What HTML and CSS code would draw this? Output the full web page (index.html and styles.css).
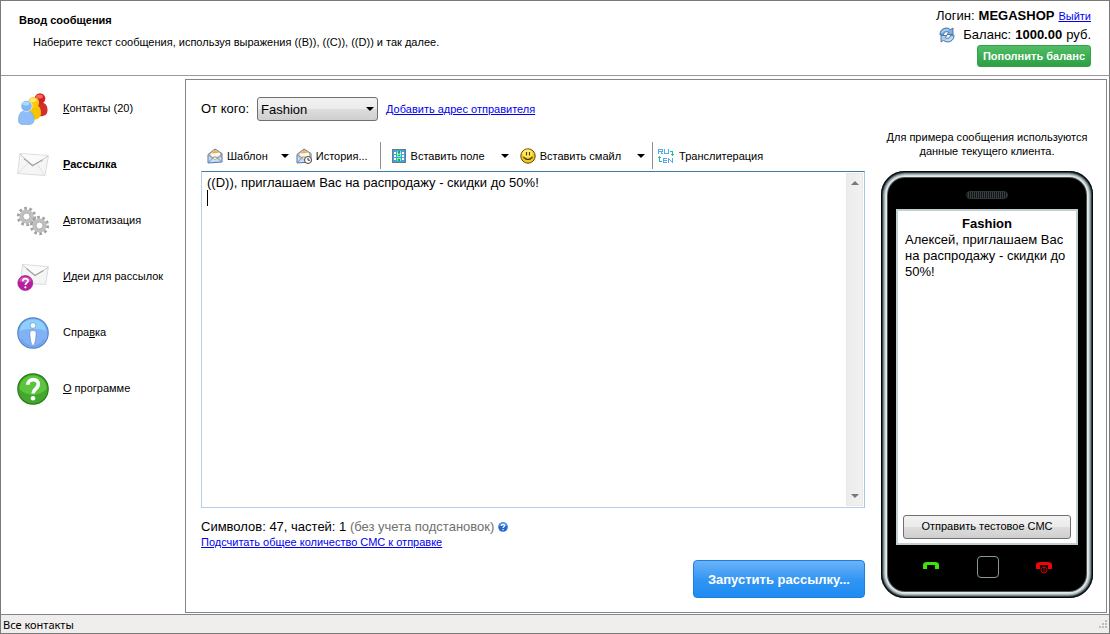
FILE: index.html
```html
<!DOCTYPE html>
<html lang="ru">
<head>
    <meta charset="UTF-8">
    <meta name="viewport" content="width=device-width, initial-scale=1.0">
    <title>Ввод сообщения</title>
    <link rel="stylesheet" href="styles.css">
</head>
<body>
    <header class="header">
        <div class="intro">
            <h1 class="title">Ввод сообщения</h1>
            <p class="subtitle">Наберите текст сообщения, используя выражения ((B)), ((C)), ((D)) и так далее.</p>
        </div>
        <div class="account">
            <div class="account-row">
                <span>Логин:</span>
                <b>MEGASHOP</b>
                <a class="link" href="#">Выйти</a>
            </div>
            <div class="account-row">
                <button class="refresh" type="button" aria-label="Обновить баланс">
                    <svg width="16" height="16" viewBox="0 0 16 16">
                        <path d="M1 8C.5 2 7-1 11.500 2.500L14 1v6.500H8l1.800-2C7.500 4 5 5 4.800 7.500z" fill="#7dafe0" stroke="#3a638f" stroke-width=".8"/>
                        <path d="M15 8c.5 6-6 9-10.500 5.500L2 15V8.500h6l-1.800 2c2.300 1.500 4.800.5 5-2z" fill="#a9cdec" stroke="#3a638f" stroke-width=".8"/>
                        <path d="M2.500 5.500Q5 2 9.500 2.800M13.500 10.500q-2 3-6 3" fill="none" stroke="#e2f0fb" stroke-width=".8"/>
                    </svg>
                </button>
                <span>Баланс:</span>
                <b>1000.00</b>
                <span>руб.</span>
            </div>
            <button class="pay-btn" type="button">Пополнить баланс</button>
        </div>
    </header>

    <div class="main">
        <nav class="sidebar">
            <a class="nav-item" href="#">
                <svg width="32" height="32" viewBox="0 0 32 32">
                    <path d="M20 23V14c0-3 2-4.500 4-4.500s6.500 1 6.500 7.500c0 5-3 7-10.500 6z" fill="#d22f2f"/>
                    <circle cx="23" cy="5.500" r="5.300" fill="#d9201f"/>
                    <ellipse cx="22.500" cy="3.500" rx="3.400" ry="2" fill="#ee6b60"/>
                    <path d="M11 25v-7c0-5 3-6.500 6-6.500s7 2 7 8c0 6-4 8.500-13 6.500z" fill="#f5c400"/>
                    <circle cx="16.500" cy="9.500" r="5.600" fill="#fbc911"/>
                    <ellipse cx="16" cy="7" rx="3.400" ry="2" fill="#ffe47a"/>
                    <path d="M1.500 27.500C1.500 21 4 17.500 9 17.500s8 3.500 8 9.500c0 3.500-3 4.800-8 4.800s-7.500-1-7.500-4.300z" fill="#90bdf8" stroke="#73a7ec" stroke-width=".7"/>
                    <circle cx="9.500" cy="13" r="5.600" fill="#82b4f5" stroke="#fff" stroke-width=".6"/>
                    <ellipse cx="9" cy="10.500" rx="3.600" ry="2" fill="#a6ddf8"/>
                </svg>
                <span><u>К</u>онтакты (20)</span>
            </a>
            <a class="nav-item active" href="#">
                <svg width="32" height="32" viewBox="0 0 32 32">
                    <path d="M3 4.500l28.500 2-3.500 20L.5 24.500z" fill="#f5f5f5" stroke="#dcdcdc"/>
                    <path d="M1 24l10-9.500M27.500 26L20.500 15.500" fill="none" stroke="#e2e2e2"/>
                    <path d="M3 5l12.500 12L31 7" fill="#fafafa" stroke="#c8c8c8"/>
                    <path d="M7 9.500l8.500 7 10-5.500" fill="none" stroke="#a2a2a2" stroke-width="1.200"/>
                </svg>
                <span><u>Р</u>ассылка</span>
            </a>
            <a class="nav-item" href="#">
                <svg width="32" height="32" viewBox="0 0 32 32">
                    <g fill="none" stroke="#a2a2a2">
                        <circle cx="9.500" cy="11.500" r="8" stroke-width="3.400" stroke-dasharray="2.600 2.430"/>
                        <circle cx="9.500" cy="11.500" r="5.300" stroke="#c0c0c0" stroke-width="3.600"/>
                        <circle cx="9.500" cy="11.500" r="3.500" stroke-width=".8"/>
                        <circle cx="22.500" cy="20.500" r="8" stroke-width="3.400" stroke-dasharray="2.600 2.430"/>
                        <circle cx="22.500" cy="20.500" r="5.300" stroke="#c0c0c0" stroke-width="3.600"/>
                        <circle cx="22.500" cy="20.500" r="3.500" stroke-width=".8"/>
                    </g>
                </svg>
                <span><u>А</u>втоматизация</span>
            </a>
            <a class="nav-item" href="#">
                <svg width="32" height="32" viewBox="0 0 32 32">
                    <path d="M5.500 3.500l26 2-3 18L3.500 22z" fill="#f5f5f5" stroke="#dcdcdc"/>
                    <path d="M5.500 4l12.500 10.500L31 6.500" fill="#fafafa" stroke="#c8c8c8"/>
                    <path d="M9.500 7.500l8.500 7 8.500-5" fill="none" stroke="#a2a2a2" stroke-width="1.200"/>
                    <circle cx="8.300" cy="22" r="7.500" fill="#b51fa0" stroke="#8f1480" stroke-width=".6"/>
                    <path d="M2 20a6.500 6 0 0 1 12.500 0q-6 3-12.500 0z" fill="#d050c0"/>
                    <path d="M5.800 20.200c.2-3.500 5.400-3.200 5.200-.2-.1 1.900-2.600 1.800-2.600 4" fill="none" stroke="#fff" stroke-width="1.800"/>
                    <circle cx="8.400" cy="26.300" r="1.100" fill="#fff"/>
                </svg>
                <span><u>И</u>деи для рассылок</span>
            </a>
            <a class="nav-item" href="#">
                <svg width="32" height="32" viewBox="0 0 32 32">
                    <circle cx="16" cy="16" r="15.200" fill="#82b1f6" stroke="#5686c6" stroke-width="1.200"/>
                    <path d="M3 14C4 6 9 2.500 16 2.500S28 6 29 14c-7-3-19-3-26 0z" fill="#8dd0fb"/>
                    <path d="M4.500 22a13 13 0 0 0 23 0" fill="none" stroke="#70a1eb" stroke-width="1.500"/>
                    <circle cx="16" cy="8.500" r="2.900" fill="#fff" stroke="#5b8dd0" stroke-width=".7"/>
                    <path d="M12.800 14.500q3.200-2.600 6.400 0c0 5-.6 9-1.600 12.500q-1.600 3-3.200 0c-1-3.500-1.600-7.500-1.600-12.500z" fill="#fff" stroke="#5b8dd0" stroke-width=".7"/>
                </svg>
                <span>Спра<u>в</u>ка</span>
            </a>
            <a class="nav-item" href="#">
                <svg width="32" height="32" viewBox="0 0 32 32">
                    <circle cx="16" cy="16" r="15.200" fill="#43a72d" stroke="#2b7a1d" stroke-width="1.200"/>
                    <path d="M2.500 16C2.500 8 8.500 2.500 16 2.500S29.500 8 29.500 16c-6 7-20 8-27 0z" fill="#5cc43e"/>
                    <path d="M10.800 11.800C11 4.700 22 5 21.300 11.800c-.4 4.200-5.200 4-5.200 8.700" fill="none" stroke="#fff" stroke-width="3.600"/>
                    <circle cx="16" cy="25.200" r="2.300" fill="#fff"/>
                </svg>
                <span><u>О</u> программе</span>
            </a>
        </nav>

        <main class="content">
            <section class="editor">
                <div class="sender">
                    <label for="sender">От кого:</label>
                    <span class="select-box">
                        <select id="sender">
                            <option>Fashion</option>
                        </select>
                        <svg class="select-arrow" width="8" height="4" viewBox="0 0 8 4"><path d="M0 0h8L4 4z"/></svg>
                    </span>
                    <a class="link" href="#">Добавить адрес отправителя</a>
                </div>

                <div class="toolbar">
                    <button class="tool" type="button">
                        <svg width="16" height="16" viewBox="0 0 16 16">
                            <path d="M1 6.500L8 1l7 4.500V14L1 15z" fill="#c6dcf7" stroke="#5374a8"/>
                            <path d="M3 5.500l5-3.500 5.500 3V9L8 11.500 3 9z" fill="#fff8e8" stroke="#d8a04c" stroke-width=".8"/>
                            <path d="M4 5.500l4-2.700 4 2z" fill="#e8ab4b"/>
                            <path d="M1.500 14.500l5-5.500h3l5 5M1.500 7l5 3M14.500 7l-5 3" fill="none" stroke="#6f91c8"/>
                        </svg>
                        Шаблон
                    </button>
                    <button class="drop" type="button" aria-label="Выбрать шаблон">
                        <svg width="8" height="4" viewBox="0 0 8 4"><path d="M0 0h8L4 4z"/></svg>
                    </button>
                    <button class="tool" type="button">
                        <svg width="16" height="16" viewBox="0 0 16 16">
                            <path d="M1 6.500L8 1l7 4.500V14L1 15z" fill="#c6dcf7" stroke="#5374a8"/>
                            <path d="M3 5.500l5-3.500 5.500 3V9L8 11.500 3 9z" fill="#fff8e8" stroke="#d8a04c" stroke-width=".8"/>
                            <path d="M4 5.500l4-2.700 4 2z" fill="#e8ab4b"/>
                            <path d="M1.500 14.500l5-5.500h3M1.500 7l5 3" fill="none" stroke="#6f91c8"/>
                            <circle cx="12" cy="12" r="3.500" fill="#fff" stroke="#444"/>
                            <path d="M12 10v2.200h2" fill="none" stroke="#222" stroke-width=".9"/>
                        </svg>
                        История...
                    </button>
                    <span class="separator"></span>
                    <button class="tool" type="button">
                        <svg width="16" height="16" viewBox="0 0 16 16" shape-rendering="crispEdges">
                            <path d="M1 1h14v14H1z" fill="#777"/>
                            <path d="M2 2h12v12H2z" fill="#35a4f0"/>
                            <path d="M3 4h2v2H3zM3 7h2v2H3zM3 10h2v2H3zM11 4h2v2h-2zM11 7h2v2h-2zM11 10h2v2h-2zM6 4h1v2H6zM6 7h1v2H6zM6 10h1v2H6zM9 4h1v2H9zM9 7h1v2H9zM9 10h1v2H9z" fill="#fff"/>
                            <path d="M6 3h4v2H6zM6 6h4v3H6zM6 10h4v3H6z" fill="#8cf58e"/>
                            <path d="M7 3h2v2H7zM7 7h2v1H7zM7 11h2v2H7z" fill="#20ad3a"/>
                        </svg>
                        Вставить поле
                    </button>
                    <button class="drop roomy" type="button" aria-label="Выбрать поле">
                        <svg width="8" height="4" viewBox="0 0 8 4"><path d="M0 0h8L4 4z"/></svg>
                    </button>
                    <button class="tool" type="button">
                        <svg width="16" height="16" viewBox="0 0 16 16">
                            <circle cx="8" cy="8" r="7.200" fill="#f4c619" stroke="#5b4a12"/>
                            <ellipse cx="7.500" cy="5.500" rx="5" ry="4" fill="#ffec62"/>
                            <path d="M6.500 4v3.500M9.500 4v3.500M3.500 9q4.500 5 9 0" fill="none" stroke="#4f3c08" stroke-width="1.200"/>
                        </svg>
                        Вставить смайл
                    </button>
                    <button class="drop roomy" type="button" aria-label="Выбрать смайл">
                        <svg width="8" height="4" viewBox="0 0 8 4"><path d="M0 0h8L4 4z"/></svg>
                    </button>
                    <span class="separator"></span>
                    <button class="tool" type="button">
                        <svg width="17" height="16" viewBox="0 0 17 16" fill="none" shape-rendering="crispEdges">
                            <path d="M.5 6V1.500H4.500v2H1M3.500 4v1h1v1M6.500 1v4.500h4V1" stroke="#55a9ee"/>
                            <path d="M9 10.500H5.500v4H9M5 12.500h3.500M10.500 15v-5M11 11.500h1M12 12.500h1M13 13.500h1M14.500 10v5" stroke="#55a9ee"/>
                            <path d="M12 3.500h2.500V8M13 6.500h3M1.500 8v5.500H4M0 9.500h3" stroke="#22bd91"/>
                        </svg>
                        Транслитерация
                    </button>
                </div>

                <div class="message-box">
                    <textarea class="message" aria-label="Текст сообщения" spellcheck="false">((D)), приглашаем Вас на распродажу - скидки до 50%!
</textarea>
                    <span class="caret"></span>
                    <div class="scrollbar">
                        <svg width="8" height="4" viewBox="0 0 8 4"><path d="M0 4h8L4 0z"/></svg>
                        <svg width="8" height="4" viewBox="0 0 8 4"><path d="M0 0h8L4 4z"/></svg>
                    </div>
                </div>

                <div class="stats">
                    <span>Символов: 47, частей: 1 <span class="note">(без учета подстановок)</span></span>
                    <svg width="10" height="10" viewBox="0 0 10 10">
                        <circle cx="5" cy="5" r="4.800" fill="#2467cf"/>
                        <path d="M1 4a4 3.600 0 0 1 8 0z" fill="#5d98ea"/>
                        <path d="M3.400 3.900c.1-2.200 3.400-2 3.200-.1-.1 1-1.500 1.100-1.500 2.200M5.100 7v1.200" fill="none" stroke="#fff" stroke-width="1.200"/>
                    </svg>
                </div>
                <div><a class="link" href="#">Подсчитать общее количество СМС к отправке</a></div>
                <button class="send-btn" type="button">Запустить рассылку...</button>
            </section>

            <aside class="preview">
                <p class="hint">Для примера сообщения используются данные текущего клиента.</p>
                <div class="phone">
                    <div class="speaker"></div>
                    <div class="screen">
                        <div>
                            <b class="screen-title">Fashion</b>
                            <p class="screen-text">Алексей, приглашаем Вас на распродажу - скидки до 50%!</p>
                        </div>
                        <button class="test-btn" type="button">Отправить тестовое СМС</button>
                    </div>
                    <div class="phone-keys">
                        <svg width="18" height="14" viewBox="0 0 18 14">
                            <path d="M1 9V5Q1 2 5 2h8q4 0 4 3v4h-4V5H5v4z" fill="#3be50c"/>
                        </svg>
                        <span class="home-key"></span>
                        <svg width="18" height="14" viewBox="0 0 18 14">
                            <path d="M1 9V5Q1 2 5 2h8q4 0 4 3v4h-4V5H5v4z" fill="#f30303"/>
                            <circle cx="9" cy="10" r="3" fill="#000" stroke="#d00000"/>
                            <path d="M9 7v5" stroke="#d00000"/>
                        </svg>
                    </div>
                </div>
            </aside>
        </main>
    </div>

    <footer class="statusbar">
        <span>Все контакты</span>
        <svg width="12" height="12" viewBox="0 0 12 12">
            <path d="M8 1h2v2H8zM5 4h2v2H5zM8 4h2v2H8zM2 7h2v2H2zM5 7h2v2H5zM8 7h2v2H8z" fill="#bdbdbd"/>
        </svg>
    </footer>
</body>
</html>
```
FILE: styles.css
```css
* {
    box-sizing: border-box;
}
body {
    display: flex;
    flex-direction: column;
    min-height: 100vh;
    margin: 0;
    border: 1px solid #7a7a7a;
    background-color: white;
    color: #000;
    font-family: "Liberation Sans", Arial, sans-serif;
    font-size: 11px;
    line-height: 14px;
}
button, select, textarea {
    font-family: inherit;
    color: inherit;
}
button {
    cursor: pointer;
}
svg {
    display: block;
    flex-shrink: 0;
}
p, h1 {
    margin: 0;
}
.link {
    color: #0000ee;
    font-size: 11px;
    text-decoration: underline;
}

/* header */
.header {
    display: flex;
    justify-content: space-between;
    height: 75px;
    padding: 5px 18px;
    border-bottom: 1px solid #999;
}
.intro {
    padding-top: 7px;
}
.title {
    font-size: 11px;
    font-weight: bold;
}
.subtitle {
    margin: 8px 0 0 14px;
}
.account {
    display: flex;
    flex-direction: column;
    align-items: flex-end;
    font-size: 13px;
}
.account-row {
    display: flex;
    align-items: center;
    gap: 4px;
    height: 19px;
}
.refresh {
    margin-right: 4px;
    padding: 0;
    border: none;
    background: none;
}
.pay-btn {
    height: 22px;
    margin-top: 1px;
    padding: 0 5px;
    border: 1px solid #35a04a;
    border-radius: 3px;
    background: linear-gradient(#51bd66, #2c9f43);
    color: white;
    font-size: 11px;
    font-weight: bold;
}

/* left menu */
.main {
    display: flex;
    flex: 1;
}
.sidebar {
    display: flex;
    flex-direction: column;
    gap: 24px;
    width: 184px;
    padding: 17px 16px;
}
.nav-item {
    display: flex;
    align-items: center;
    gap: 14px;
    color: #000;
    text-decoration: none;
}
.nav-item span {
    padding-bottom: 2px;
}
.active {
    font-weight: bold;
}

/* message editor */
.content {
    display: flex;
    flex: 1;
    gap: 16px;
    margin: 3px 2px 1px 0;
    padding: 0 13px 14px 15px;
    border: 1px solid #84848c;
}
.editor {
    display: flex;
    flex: 1;
    flex-direction: column;
    padding-top: 17px;
}
.sender {
    display: flex;
    align-items: center;
    gap: 8px;
    height: 24px;
    margin-bottom: 21px;
    font-size: 13px;
}
.select-box {
    display: grid;
    align-items: center;
    width: 121px;
}
.select-box select {
    grid-area: 1 / 1;
    height: 24px;
    padding: 0 3px;
    border: 1px solid #707070;
    border-radius: 3px;
    background: linear-gradient(#f2f2f2, #ebebeb 50%, #dddddd 50%, #cfcfcf);
    font-size: 13px;
    appearance: none;
}
.select-arrow {
    grid-area: 1 / 1;
    justify-self: end;
    margin-right: 4px;
    pointer-events: none;
}
.toolbar {
    display: flex;
    align-items: center;
    height: 27px;
    margin-bottom: 2px;
    padding-left: 6px;
}
.tool {
    display: flex;
    align-items: center;
    gap: 4px;
    padding: 0;
    border: none;
    background: none;
    font-size: 11px;
    white-space: nowrap;
}
.drop {
    padding: 6px 7px 6px 13px;
    border: none;
    background: none;
}
.roomy {
    padding-left: 16px;
}
.roomy + .tool {
    margin-left: 4px;
}
.separator {
    align-self: stretch;
    width: 1px;
    margin: 0 10px 0 12px;
    background-color: #8f8f8f;
}
.drop + .separator {
    margin: 0 5px 0 0;
}
.message-box {
    position: relative;
    display: flex;
    flex: 1;
    padding: 1px;
    border: 1px solid #b5cfe7;
    border-top-color: #3d7bad;
    border-right-color: #a4c9e3;
}
.message {
    flex: 1;
    padding: 2px 4px;
    border: none;
    outline: none;
    font-size: 13px;
    line-height: 16px;
    resize: none;
    overflow: hidden;
}
.caret {
    position: absolute;
    top: 18px;
    left: 5px;
    width: 1px;
    height: 16px;
    background-color: #000;
}
.scrollbar {
    display: flex;
    flex-direction: column;
    align-items: center;
    justify-content: space-between;
    width: 17px;
    padding: 7px 0;
    border: 1px solid #e8e8e8;
    background: linear-gradient(to right, #ececec, #f1f1f1);
    fill: #777;
}
.stats {
    display: flex;
    align-items: center;
    gap: 4px;
    margin-top: 11px;
    font-size: 13px;
    line-height: 16px;
}
.note {
    color: #707070;
}
.send-btn {
    align-self: flex-end;
    height: 38px;
    margin-top: 11px;
    padding: 0 14px;
    border: 1px solid #1a7fe0;
    border-radius: 4px;
    background: linear-gradient(#6cb3f8, #2f94f3 55%, #1f8cf1);
    color: white;
    font-size: 13px;
    font-weight: bold;
}

/* phone preview */
.preview {
    display: flex;
    flex-direction: column;
    width: 212px;
    padding-top: 50px;
}
.hint {
    margin-bottom: 13px;
    text-align: center;
}
.phone {
    display: flex;
    flex: 1;
    flex-direction: column;
    align-items: center;
    padding: 20px 15px 0;
    border-radius: 24px;
    background-color: #000;
    box-shadow:
        inset 0 0 0 1px #05090a,
        inset 0 0 0 2px #344146,
        inset 0 0 0 3px #7b8a8f,
        inset 0 0 0 4px #a9b6b9,
        inset 0 0 0 5px #d5dddf,
        inset 0 0 0 6px #e4e9e9,
        inset 0 0 0 7px #4a5052;
}
.speaker {
    width: 42px;
    height: 8px;
    margin-bottom: 10px;
    border: 1px solid #2f3537;
    border-radius: 4px;
    background: repeating-linear-gradient(to right, #101314 0 1px, #3a4143 1px 2px);
}
.screen {
    display: flex;
    flex: 1;
    flex-direction: column;
    justify-content: space-between;
    width: 100%;
    padding: 5px 5px 4px;
    border: 2px solid #c3d0d2;
    background-color: white;
    font-size: 13px;
    line-height: 16px;
}
.screen-title {
    display: block;
    text-align: center;
}
.screen-text {
    padding-left: 2px;
}
.test-btn {
    width: 100%;
    height: 24px;
    padding: 0 0 2px;
    border: 1px solid #707070;
    border-radius: 3px;
    background: linear-gradient(#f2f2f2, #ebebeb 50%, #dddddd 50%, #cfcfcf);
    font-size: 11px;
}
.phone-keys {
    display: flex;
    align-items: center;
    justify-content: space-between;
    width: 100%;
    height: 53px;
    padding: 0 25px 10px 26px;
}
.home-key {
    width: 22px;
    height: 22px;
    border: 1px solid #8c9799;
    border-radius: 4px;
}

/* status bar */
.statusbar {
    display: flex;
    align-items: center;
    justify-content: space-between;
    height: 19px;
    padding: 2px 0 0 2px;
    border-top: 1px solid #84848c;
    background-color: #f0eded;
    font-family: "Noto Sans", Tahoma, sans-serif;
    font-size: 11px;
}
```
